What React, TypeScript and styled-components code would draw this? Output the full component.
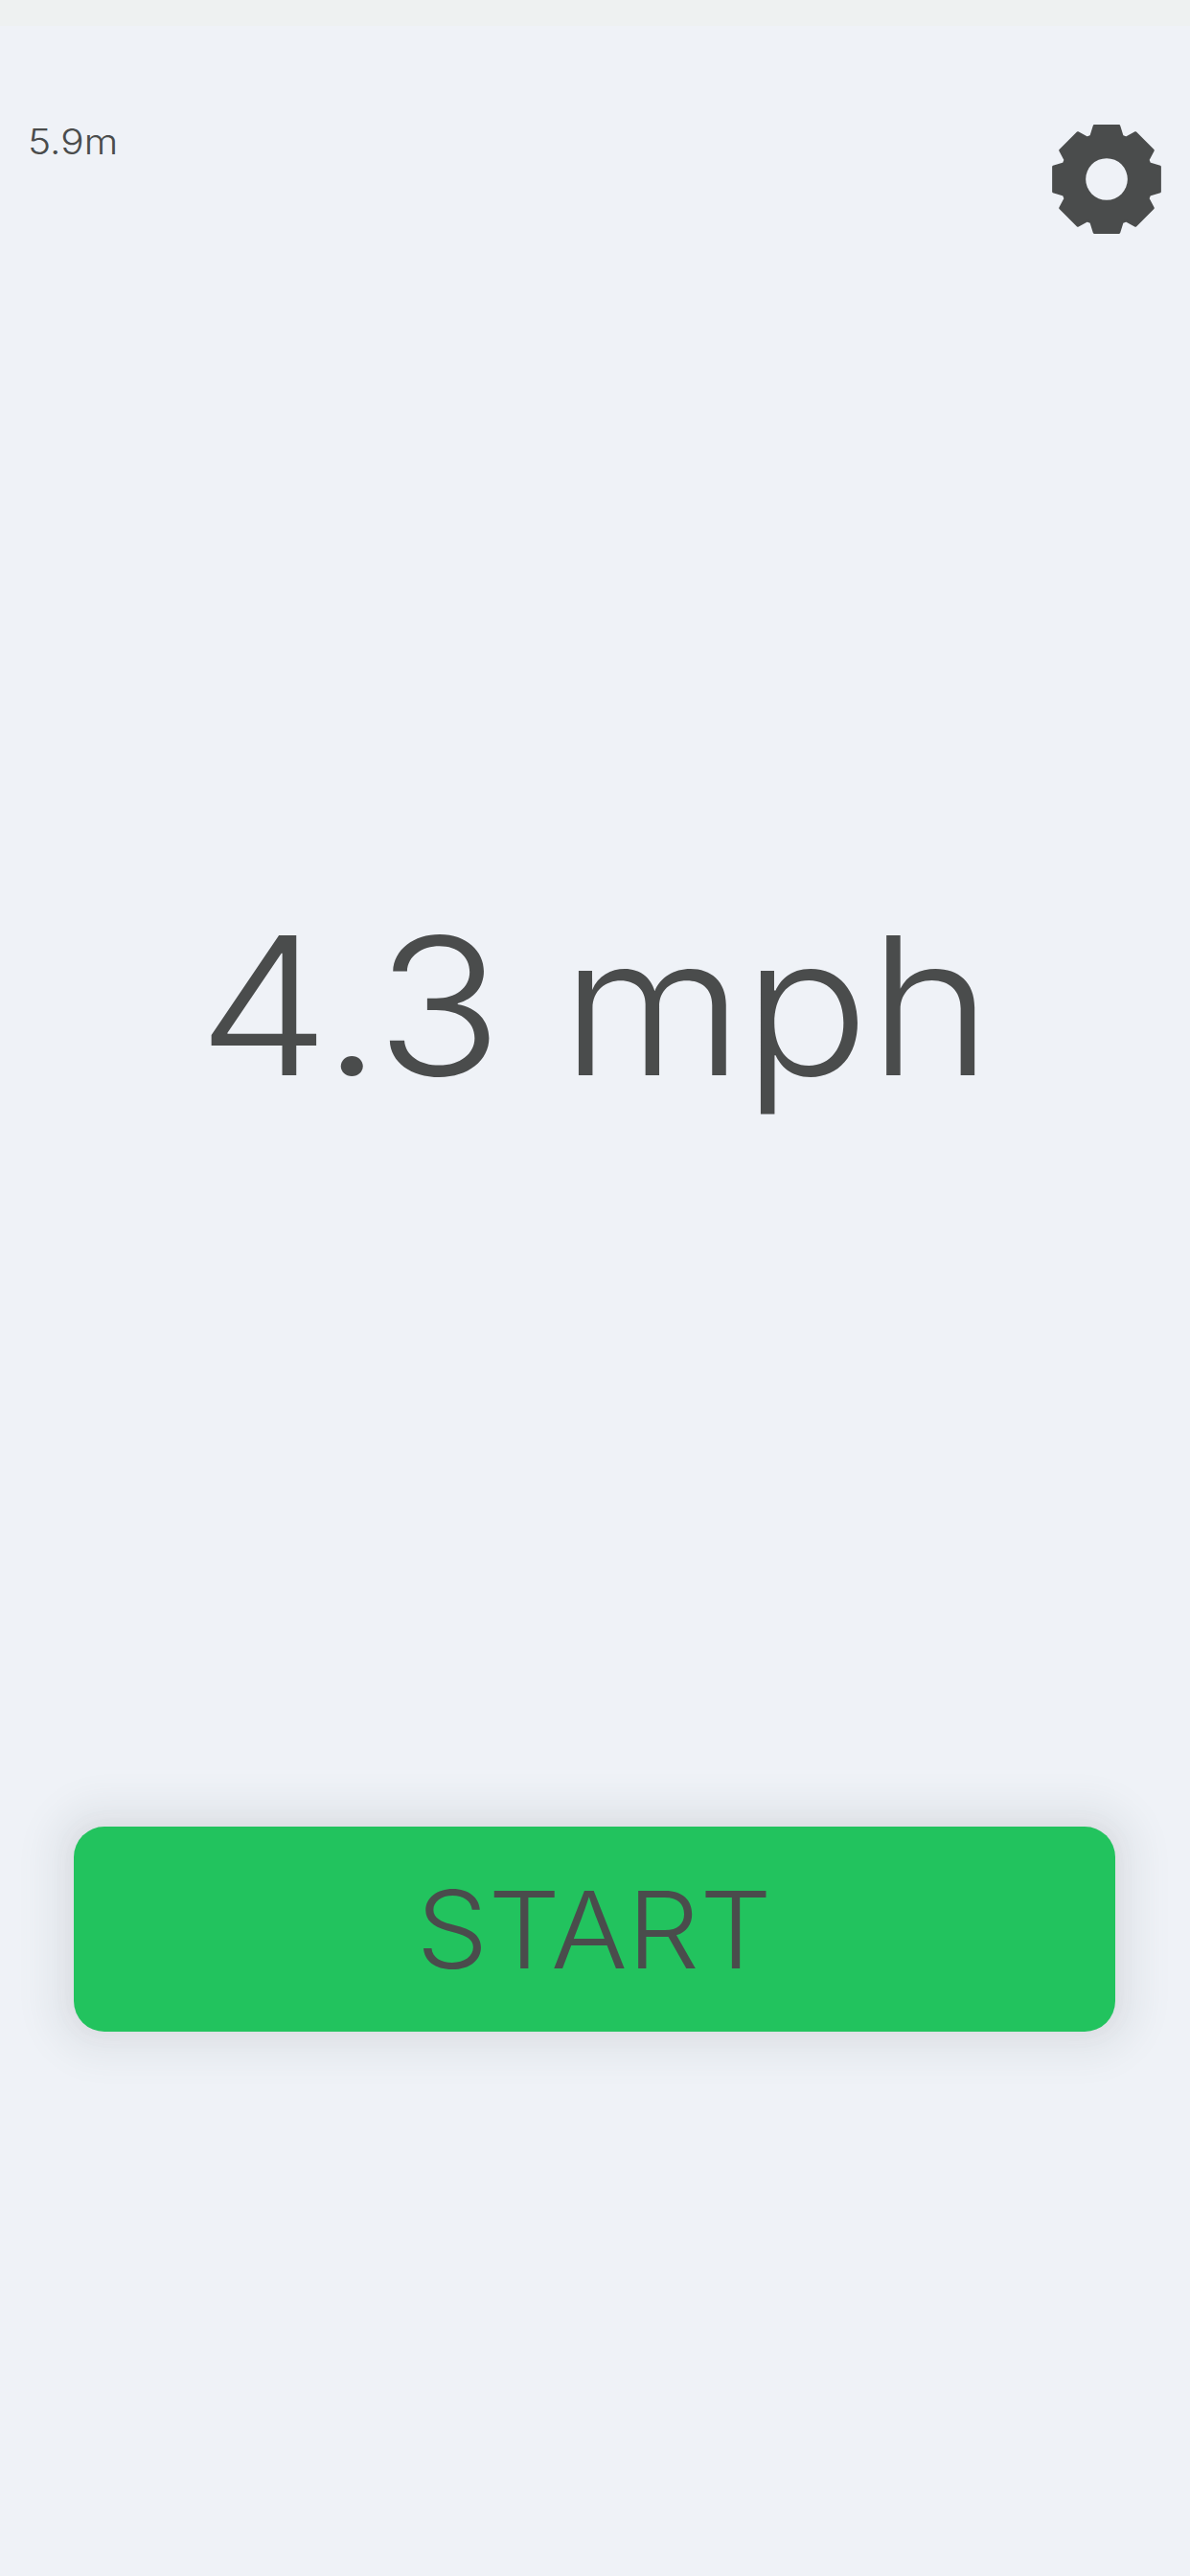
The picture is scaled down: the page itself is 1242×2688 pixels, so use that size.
import styled, { createGlobalStyle } from 'styled-components';

const GlobalStyle = createGlobalStyle`
  html, body {
    margin: 0;
    padding: 0;
    background: #eff2f7;
  }
`;

const Page = styled.div`
  width: 1242px;
  height: 2688px;
  overflow: hidden;
  display: flex;
  flex-direction: column;
  background: #eff2f7;
  color: #4a4c4c;
  font-family: Inter, 'Liberation Sans', sans-serif;
`;

const StatusStrip = styled.div`
  height: 27px;
  background: #eef1f1;
`;

const Header = styled.header`
  display: flex;
  justify-content: space-between;
  align-items: flex-start;
  height: 218px;
  padding: 101px 28px 0 29px;
  box-sizing: border-box;
`;

const Distance = styled.span`
  font-size: 37px;
  line-height: 40px;
  font-weight: 300;
  transform: scaleX(1.1);
  transform-origin: left center;
`;

const SettingsButton = styled.button`
  display: block;
  width: 118px;
  height: 118px;
  padding: 0;
  border: none;
  background: none;
  color: #4a4c4c;
  svg {
    display: block;
  }
`;

const SpeedArea = styled.main`
  display: flex;
  justify-content: center;
  height: 1661px;
  padding-top: 684px;
  box-sizing: border-box;
`;

const Speed = styled.div`
  font-size: 200px;
  line-height: 240px;
  height: 240px;
  font-weight: 300;
  white-space: pre;
  transform: scaleX(1.09);
`;

const Footer = styled.footer`
  padding: 0 78px 0 77px;
`;

const StartButton = styled.button`
  display: block;
  width: 100%;
  height: 214px;
  padding: 0;
  border: none;
  border-radius: 32px;
  background: #22c35e;
  box-shadow: 0 0 22px 4px rgba(70, 75, 75, 0.07), 0 0 30px 32px rgba(120, 130, 130, 0.07);
  color: #4a4c4c;
  font-family: inherit;
  font-size: 112px;
  font-weight: 300;
`;

const StartLabel = styled.span`
  display: inline-block;
  transform: scaleX(1.06);
`;

// 8 teeth around a 200 unit box
const gearPoints = Array.from({ length: 8 }, (_, i) => {
  const a = (i * Math.PI) / 4;
  const corner = (r: number, d: number) => {
    const x = 100 + r * Math.sin(a + d);
    const y = 100 - r * Math.cos(a + d);
    return `${x.toFixed(1)},${y.toFixed(1)}`;
  };
  return [corner(81, -0.35), corner(97, -0.23), corner(97, 0.23), corner(81, 0.35)].join(' ');
}).join(' ');

function GearIcon() {
  return (
    <svg width="118" height="118" viewBox="0 0 200 200">
      <polygon points={gearPoints} fill="currentColor" stroke="currentColor" strokeWidth="4" strokeLinejoin="round" />
      <circle cx="100" cy="100" r="37" fill="#eff2f7" />
    </svg>
  );
}

function App() {
  return (
    <Page>
      <GlobalStyle />
      <StatusStrip />
      <Header>
        <Distance>5.9m</Distance>
        <SettingsButton aria-label="Settings">
          <GearIcon />
        </SettingsButton>
      </Header>
      <SpeedArea>
        <Speed>4.3 mph</Speed>
      </SpeedArea>
      <Footer>
        <StartButton>
          <StartLabel>START</StartLabel>
        </StartButton>
      </Footer>
    </Page>
  );
}

export default App;
